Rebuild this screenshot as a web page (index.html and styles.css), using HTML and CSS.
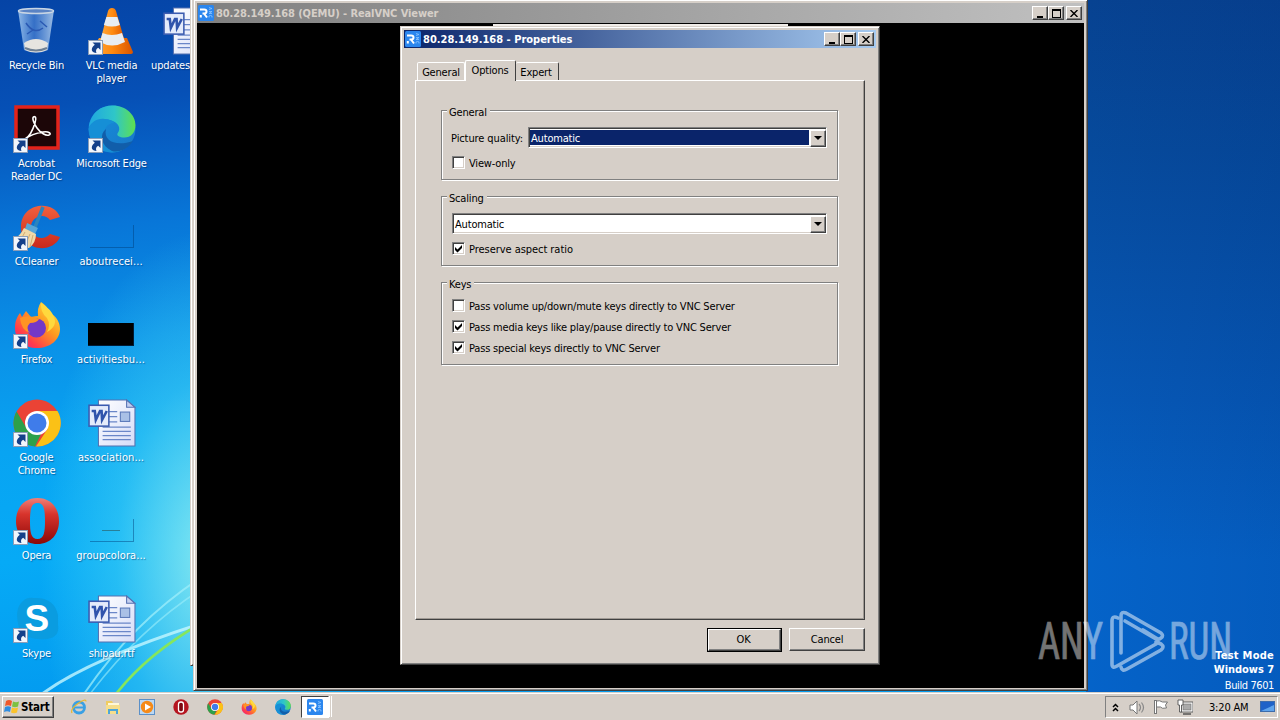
FILE: index.html
```html
<!DOCTYPE html>
<html lang="en">
<head>
<meta charset="utf-8">
<title>Desktop</title>
<link rel="stylesheet" href="styles.css">
</head>
<body>
<svg class="defs" width="0" height="0">
  <defs>
    <linearGradient id="vlcO" x1="0" x2="1"><stop offset="0" stop-color="#ffab40"/><stop offset=".5" stop-color="#ff8a10"/><stop offset="1" stop-color="#d95400"/></linearGradient>
    <linearGradient id="edgeTop" x1="0" x2="1"><stop offset="0" stop-color="#1fa7e0"/><stop offset=".55" stop-color="#2fc6c8"/><stop offset="1" stop-color="#5fe04e"/></linearGradient>
    <linearGradient id="edgeLow" x1="0" x2="1" y2="1"><stop offset="0" stop-color="#1490dc"/><stop offset="1" stop-color="#1a78c8"/></linearGradient>
    <linearGradient id="ffx" x1="1" y1="0" x2=".1" y2="1"><stop offset="0" stop-color="#fff04a"/><stop offset=".45" stop-color="#ff9a1f"/><stop offset=".8" stop-color="#ff3b4d"/><stop offset="1" stop-color="#e6208a"/></linearGradient>
    <linearGradient id="opr" x2="0" y2="1"><stop offset="0" stop-color="#f08078"/><stop offset=".35" stop-color="#d8342c"/><stop offset="1" stop-color="#8c0808"/></linearGradient>
    <linearGradient id="ccl" x2="0" y2="1"><stop offset="0" stop-color="#f2603c"/><stop offset="1" stop-color="#c8281c"/></linearGradient>
    <linearGradient id="bin" x2="1"><stop offset="0" stop-color="#a8cdf2" stop-opacity=".85"/><stop offset=".45" stop-color="#4f86d6" stop-opacity=".65"/><stop offset="1" stop-color="#b9d3ef" stop-opacity=".85"/></linearGradient>
    <linearGradient id="paper" x2="1" y2="1"><stop offset="0" stop-color="#fff"/><stop offset="1" stop-color="#d5dcf8"/></linearGradient>

    <symbol id="arrow" viewBox="0 0 15 15">
      <rect x=".5" y=".5" width="14" height="14" fill="#f2f6fc" stroke="#8a9db8"/>
      <path d="M4.500 2.500h8v7.500l-2.300-2.200C8 9 7.500 11 8.500 13 4 13 1.500 9 6.800 4.800z" fill="#14408a"/>
    </symbol>
    <symbol id="recycle" viewBox="0 0 48 48">
      <path d="M5 3 11 43q12 6 24 0L41 3z" fill="url(#bin)"/>
      <path d="M11 36q12-8 24 0l-1 7q-11 5-22 0z" fill="#e6e4e0"/>
      <path d="M12 41q11 5 22 0" stroke="#6f8093" fill="none" stroke-width="2"/>
      <path d="M13 16q8 12 17 5M14 27l6-4M27 14l7 6" stroke="#2a59b3" stroke-width="1.500" fill="none"/>
      <ellipse cx="23" cy="4" rx="17.500" ry="2.500" fill="#5a83c4" stroke="#c8d5e4" stroke-width="1.500"/>
    </symbol>
    <symbol id="vlc" viewBox="0 0 48 48">
      <path d="M11 31h28l6 14q0 2-2 2H5q-2 0-2-2z" fill="url(#vlcO)"/>
      <path d="M24 1q3 0 4 3l9 31q-13 7-25 0L20 4q1-3 4-3z" fill="url(#vlcO)"/>
      <path d="M18.400 10h11l2.500 8q-8 3-16 0z" fill="#e8edf2"/>
      <path d="M14.500 26q9 4 19.500 0l3 9q-13 7-25 0z" fill="#e8edf2"/>
    </symbol>
    <symbol id="doc" viewBox="0 0 46 46">
      <path d="M10 1h27l8 7v37H10z" fill="url(#paper)" stroke="#5570b0" stroke-width="1"/>
      <path d="M37 1v7h8z" fill="#c3cff0" stroke="#5570b0"/>
      <path d="M20 12h8M20 17h8M20 22h8M14 27h27M14 31h27M14 35h27M14 39h27" stroke="#6a86c8" stroke-width="1.200"/>
      <rect x="31" y="12.500" width="9" height="9" fill="#a9c0e6" stroke="#5978b8"/>
      <rect x="1" y="6" width="19" height="20" fill="#e4ebfb" stroke="#3c5cb0" stroke-width="1.500"/>
      <path d="M3.500 11.500h3l1 8.500 4-8.500h1.500l.5 8.500 4.500-8.500" fill="none" stroke="#3054ac" stroke-width="2.500"/>
    </symbol>
    <symbol id="acrobat" viewBox="0 0 48 48">
      <rect x="3" y="2" width="42" height="41" fill="#1c0608" stroke="#e2231a" stroke-width="3.500"/>
      <path d="M12 34q6-3 10-16c2-6 0-7-1.500-6s0 6 3.500 11 9 8 12 7 0-4-6-3-14 4-18 7z" fill="none" stroke="#fff" stroke-width="1.600"/>
    </symbol>
    <symbol id="edge" viewBox="0 0 48 48">
      <circle cx="24" cy="24" r="23.500" fill="url(#edgeLow)"/>
      <path d="M.8 22C3 8 12 .5 25 .5 38 .5 47.500 10 47.500 20c0 8-5 12.500-11 12.500-5 0-8-2-7-4 4-5 1-11-6-13C14 13 5 16 .8 22z" fill="url(#edgeTop)"/>
      <path d="M.6 24c2-7 9-11 16-10 5 0 8 2 10 4-8 0-12 7-10 14 2 8 9 14 17 13.500Q28 48 23 47.500 2 46 .6 24z" fill="#168fd6"/>
      <path d="M18 24c-3 12 10 18 27 12-5 8-14 12-21 10-11-5-13-17-6-22z" fill="#115eaa"/>
    </symbol>
    <symbol id="ccleaner" viewBox="0 0 48 48">
      <path d="M47 14 37 17C31 9 18 14 18 24s12 15 19 7l10 3C39 52 8 48 8 24S40-4 47 14z" fill="url(#ccl)"/>
      <path d="M30 4 22 24" stroke="#2c84bc" stroke-width="3.500"/>
      <path d="M14 20l11 5-3 6-10-5z" fill="#57a6d6"/>
      <path d="M11 25l12 6q0 9-7 14Q7 45 0 37q7-4 11-12z" fill="#f0d9a8"/>
      <path d="M12 29 6 40M17 31l-5 12M20 32l-3 12" stroke="#d2ac70"/>
    </symbol>
    <symbol id="firefox" viewBox="0 0 48 48">
      <path d="M28 1c6 4 8 8 9 11 6 3 10 9 10 16 0 11-10 19-23 19S2 39 2 27c0-7 2-11 5-15l2 4 4-6 5 6q4-1 7-1-1-8 3-14z" fill="url(#ffx)"/>
      <circle cx="23.500" cy="27" r="9.500" fill="#7438c8"/>
      <path d="M7 17q8-4 19 1-2 4-9 4-5 5 0 10-9-3-10-15z" fill="#ff9324"/>
      <path d="M28 2q-1 9 6 15 4 7 0 14 11-6 7-15-3-8-13-14z" fill="#ffd93d"/>
    </symbol>
    <symbol id="chrome" viewBox="0 0 48 48">
      <circle cx="24" cy="24" r="23.500" fill="#ea4335"/>
      <path d="M24 12h20.500A23.500 23.500 0 0 1 23 47.500L34.500 30z" fill="#fbc116"/>
      <path d="M3.600 12.500 14 30q5 6 14 5l-6 12.500A23.500 23.500 0 0 1 3.600 12.500z" fill="#2da04a"/>
      <circle cx="24" cy="24" r="12" fill="#fff"/><circle cx="24" cy="24" r="9.500" fill="#3f7cea"/>
    </symbol>
    <symbol id="opera" viewBox="0 0 48 48">
      <path fill-rule="evenodd" d="M24.500 1C38 1 46 11 46 24S38 47 24.500 47 3 37 3 24 11 1 24.500 1zm0 5C18 6 17 13 17 24s1 18 7.500 18S32 35 32 24 31 6 24.500 6z" fill="url(#opr)"/>
    </symbol>
    <symbol id="skype" viewBox="0 0 48 48">
      <path d="M10 6q4-4 11-3 20-1 24 17 0 5 0 10 2 12-11 14-18 2-27-8-7-22 3-30z" fill="#0a9ce0"/>
    </symbol>
    <symbol id="vnc" viewBox="0 0 16 16">
      <rect width="16" height="16" rx="1.500" fill="#2b86ee"/>
      <path d="M2 4.500h4.200q2.300 0 2.300 2T6.200 8.500H4.500M6 8.500l3 4M2.800 12.500V10" fill="none" stroke="#fff" stroke-width="2"/>
      <path d="M11 2.500l3 1-3 1M11 6.500h3l-3 2h3M14 12.500V11q-1.500-1-3 0v1.500" fill="none" stroke="#8cc4ff" stroke-width=".8"/>
    </symbol>
    <symbol id="check" viewBox="0 0 13 13"><path d="M3 5v3l2.500 2.500L10 6V3L5.500 7.500z" fill="#000"/></symbol>
  </defs>
</svg>

<main class="desktop">
  <svg class="rays" width="200" height="260" viewBox="0 0 200 260">
    <g fill="none">
      <path d="M42 236C75 212 125 190 200 166" stroke="#c4f6ff" stroke-width="3" opacity=".8"/>
      <path d="M84 236C115 190 155 150 200 120" stroke="#9deefa" stroke-width="2" opacity=".75"/>
      <path d="M90 236C125 190 160 158 200 132" stroke="#9deefa" stroke-width="1.500" opacity=".6"/>
      <path d="M116 236C138 208 165 186 200 166" stroke="#86e65c" stroke-width="2.600"/>
    </g>
  </svg>

  <section class="icons">
    <div class="icon"><span class="pic"><svg class="art"><use href="#recycle"/></svg></span><span class="cap">Recycle Bin</span></div>
    <div class="icon"><span class="pic"><svg class="art"><use href="#vlc"/></svg><svg class="link"><use href="#arrow"/></svg></span><span class="cap">VLC media<br>player</span></div>
    <div class="icon"><span class="pic"><svg class="art"><use href="#doc"/></svg></span><span class="cap cut">updates</span></div>
    <div class="icon"><span class="pic"><svg class="art"><use href="#acrobat"/></svg><svg class="link"><use href="#arrow"/></svg></span><span class="cap">Acrobat<br>Reader DC</span></div>
    <div class="icon"><span class="pic"><svg class="art"><use href="#edge"/></svg><svg class="link"><use href="#arrow"/></svg></span><span class="cap">Microsoft Edge</span></div>
    <i></i>
    <div class="icon"><span class="pic"><svg class="art"><use href="#ccleaner"/></svg><svg class="link"><use href="#arrow"/></svg></span><span class="cap">CCleaner</span></div>
    <div class="icon"><span class="pic"><b class="thumb"></b></span><span class="cap long">aboutrecei...</span></div>
    <i></i>
    <div class="icon"><span class="pic"><svg class="art"><use href="#firefox"/></svg><svg class="link"><use href="#arrow"/></svg></span><span class="cap">Firefox</span></div>
    <div class="icon"><span class="pic"><b class="thumb black"></b></span><span class="cap long">activitiesbu...</span></div>
    <i></i>
    <div class="icon"><span class="pic"><svg class="art"><use href="#chrome"/></svg><svg class="link"><use href="#arrow"/></svg></span><span class="cap">Google<br>Chrome</span></div>
    <div class="icon"><span class="pic"><svg class="art"><use href="#doc"/></svg></span><span class="cap long">association...</span></div>
    <i></i>
    <div class="icon"><span class="pic"><svg class="art"><use href="#opera"/></svg><svg class="link"><use href="#arrow"/></svg></span><span class="cap">Opera</span></div>
    <div class="icon"><span class="pic"><b class="thumb dash"></b></span><span class="cap long">groupcolora...</span></div>
    <i></i>
    <div class="icon"><span class="pic"><svg class="art"><use href="#skype"/></svg><span class="sk">S</span><svg class="link"><use href="#arrow"/></svg></span><span class="cap">Skype</span></div>
    <div class="icon"><span class="pic"><svg class="art"><use href="#doc"/></svg></span><span class="cap">shipau.rtf</span></div>
  </section>

  <div class="window back"></div>
  <div class="window viewer">
    <header class="title inactive">
      <svg class="ticon"><use href="#vnc"/></svg><span class="ttext">80.28.149.168 (QEMU) - RealVNC Viewer</span>
      <span class="wbtn"><b class="min"></b></span><span class="wbtn"><b class="max"></b></span><span class="wbtn close"><svg width="8" height="7" viewBox="0 0 8 7"><path d="M.5 0 7.500 7M7.500 0 .5 7" stroke="#000" stroke-width="1.400"/></svg></span>
    </header>
    <div class="screen"><div class="sliver"></div></div>
  </div>

  <div class="window dialog">
    <header class="title active">
      <svg class="ticon"><use href="#vnc"/></svg><span class="ttext">80.28.149.168 - Properties</span>
      <span class="wbtn"><b class="min"></b></span><span class="wbtn"><b class="max"></b></span><span class="wbtn close"><svg width="8" height="7" viewBox="0 0 8 7"><path d="M.5 0 7.500 7M7.500 0 .5 7" stroke="#000" stroke-width="1.400"/></svg></span>
    </header>
    <nav class="tabs"><span class="tab first">General</span><span class="tab on">Options</span><span class="tab last">Expert</span></nav>
    <div class="pane">
      <section class="group"><h2>General</h2>
        <div class="row quality"><label>Picture quality:</label><div class="combo focus"><span>Automatic</span><b class="drop"></b></div></div>
        <div class="row opt view"><b class="box"></b><label>View-only</label></div>
      </section>
      <section class="group"><h2>Scaling</h2>
        <div class="row scale"><div class="combo"><span>Automatic</span><b class="drop"></b></div></div>
        <div class="row opt"><b class="box"><svg><use href="#check"/></svg></b><label class="aspect">Preserve aspect ratio</label></div>
      </section>
      <section class="group keys"><h2>Keys</h2>
        <div class="row opt"><b class="box"></b><label>Pass volume up/down/mute keys directly to VNC Server</label></div>
        <div class="row opt"><b class="box"><svg><use href="#check"/></svg></b><label>Pass media keys like play/pause directly to VNC Server</label></div>
        <div class="row opt"><b class="box"><svg><use href="#check"/></svg></b><label>Pass special keys directly to VNC Server</label></div>
      </section>
    </div>
    <footer class="actions"><div class="default"><button class="btn">OK</button></div><button class="btn wide">Cancel</button></footer>
  </div>

  <div class="build"><b>Test Mode</b><b>Windows 7</b><span>Build 7601</span></div>
  <svg class="mark" width="200" height="70" viewBox="1035 605 200 70">
    <g fill="#fff" stroke="#fff" stroke-width=".7" opacity=".45" font-family="Roboto, sans-serif" font-size="52">
      <text x="1038" y="659" textLength="65" lengthAdjust="spacingAndGlyphs">ANY</text>
      <text x="1169" y="659" textLength="63" lengthAdjust="spacingAndGlyphs">RUN</text>
    </g>
    <g fill="none" stroke="#fff" opacity=".5" stroke-width="3.600" stroke-linejoin="round" stroke-linecap="round">
      <path d="M1118 618q-6-3-6 3v43q0 5 5 2l39-22q4-3 0-5l-31-18"/>
      <path d="M1121 653v-37q0-5 5-3l35 20q3 3 0 5-2 2-5 0l-13-8"/>
      <path d="M1121 667q1 5 6 2l34-19q4-3 0-6l-5-2"/>
    </g>
  </svg>
</main>

<footer class="taskbar">
  <div class="start"><svg width="16" height="16" viewBox="0 0 16 16"><path d="M2 2q3-2 6 0L7 7Q4 5.500 1 7z" fill="#f0582a"/><path d="M9 2.500q3 1.500 6 0L14 7.500q-3 1.500-6 0z" fill="#7cc142"/><path d="M1 8q3-1.500 6 0l-1 5q-3-1.500-6 0z" fill="#2f8de0"/><path d="M8 8.500q3 1.500 6 0l-1 5q-3 1.500-6 0z" fill="#fbc32c"/></svg><span>Start</span></div>
  <div class="quick">
    <svg viewBox="0 0 16 16"><circle cx="8" cy="8.500" r="5.500" fill="none" stroke="#3aa0e4" stroke-width="2.800"/><path d="M4 8.500h9" stroke="#3aa0e4" stroke-width="2"/><path d="M1 14Q-1 10 7 4.500T15 2.500" fill="none" stroke="#e8b830" stroke-width="1.200"/></svg>
    <svg viewBox="0 0 16 16"><path d="M1 2h6l1 2h6v3H1z" fill="#f0cc60"/><path d="M3 4h11v3H3z" fill="#fff8d8"/><path d="M1 6h14v9H1z" fill="#f6de8c"/><path d="M4 15v-4h8v4" fill="none" stroke="#4fa6d8" stroke-width="2"/></svg>
    <svg viewBox="0 0 16 16"><rect x=".5" y=".5" width="15" height="15" fill="#bcd8f3" stroke="#5b90c8"/><circle cx="8" cy="8" r="6.200" fill="#f58a18"/><path d="M6 4.500v7L12 8z" fill="#fff"/></svg>
    <svg viewBox="0 0 16 16"><circle cx="8" cy="8" r="7.700" fill="#b51520"/><rect x="5.500" y="3" width="5" height="10" rx="2.300" fill="#7c0710" stroke="#fff" stroke-width="1.300"/></svg>
    <svg><use href="#chrome"/></svg>
    <svg><use href="#firefox"/></svg>
    <svg><use href="#edge"/></svg>
  </div>
  <div class="task"><svg><use href="#vnc"/></svg></div><b class="grip"></b>
  <div class="tray">
    <svg class="chev" width="7" height="9" viewBox="0 0 7 9"><path d="M1 4 3.500 1.500 6 4M1 8l2.500-2.500L6 8" fill="none" stroke="#000" stroke-width="1.500"/></svg>
    <svg class="snd" width="17" height="15" viewBox="0 0 17 15"><path d="M1 5h3l4-4v13l-4-4H1z" fill="#fff" stroke="#777"/><path d="M10 4q3 3.500 0 7M12.500 2.500q4 5 0 10" fill="none" stroke="#888" stroke-width="1.200"/></svg>
    <svg class="flag" width="16" height="16" viewBox="0 0 16 16"><path d="M2.500 1v14" stroke="#777" stroke-width="3"/><path d="M3.500 2q3-1 6 1h5l-2 3 1 3q-5 1-6-1H3.500z" fill="#fff" stroke="#777"/><path d="M2.500 2v12" stroke="#fff"/></svg>
    <svg class="net" width="16" height="16" viewBox="0 0 16 16"><rect x="4" y="3" width="12" height="10" fill="#fff" stroke="#555" stroke-width=".9"/><rect x="6" y="5" width="8" height="6" fill="#aaa" stroke="#777" stroke-width=".7"/><path d="M6 15h8" stroke="#555" stroke-width="1.500"/><path d="M1 1h5v5H4.500v7H2.500V6H1z" fill="#fff" stroke="#555" stroke-width=".9"/></svg>
    <span class="clock">3:20 AM</span>
    <svg class="show" width="15" height="13" viewBox="0 0 15 13"><rect x=".5" y=".5" width="14" height="10" fill="#1e62c8" stroke="#3d6cab"/><path d="M1 10 14 4v6z" fill="#5fa4ec"/><path d="M5 12h5" stroke="#cbd8e8"/></svg>
  </div>
</footer>
</body>
</html>
```
FILE: styles.css
```css
* { box-sizing: border-box; }
body {
  margin: 0; width: 1280px; height: 720px; overflow: hidden;
  display: flex; flex-direction: column;
  font: 11px/13px "DejaVu Sans Condensed", "DejaVu Sans", sans-serif; font-stretch: condensed;
  letter-spacing: -0.18px; color: #000;
}
.defs { position: absolute; }
.desktop {
  position: relative; width: 1280px; height: 692px; flex: none; overflow: hidden;
  background:
    linear-gradient(90deg, transparent 1086px, rgba(0,35,110,.12) 1280px),
    linear-gradient(180deg, #074291 0, #064a9c 150px, #0658b6 400px, #0563c8 560px, #0563c9 692px) 1086px 0 / 194px 692px no-repeat,
    radial-gradient(ellipse 170px 330px at 210px 560px, rgba(165,248,240,.8), rgba(80,220,245,.42) 55%, transparent),
    linear-gradient(174deg, #0544a6 0, #0650b6 110px, #0876d8 235px, #0a92e8 350px, #08a4f2 450px, #06aaf6 560px, #039cf0 692px);
}
.rays { position: absolute; left: 0; top: 458px; }
.icons { position: relative; left: -1px; display: grid; grid-template-columns: repeat(3, 75px); grid-auto-rows: 98px; padding-top: 7px; }
.icon { display: flex; flex-direction: column; align-items: center; color: #fff; text-align: center; text-shadow: 1px 1px 1px rgba(0,35,90,.5); }
.pic { position: relative; width: 48px; height: 48px; margin: 0 0 4px; display: flex; align-items: flex-end; justify-content: center; }
.art { width: 48px; height: 48px; }
.cap { white-space: nowrap; }
.long { letter-spacing: .08px; margin-left: -1px; }
.cut { margin-left: -32px; }
.link { position: absolute; left: 0; bottom: 0; width: 15px; height: 15px; }
.sk { position: absolute; left: 12px; top: 1px; font: bold 37px/46px "Liberation Sans", sans-serif; text-shadow: none; letter-spacing: 0; }
.thumb { width: 44px; height: 23px; margin-bottom: 3px; border: solid rgba(0,60,120,.45); border-width: 0 1px 1px 0; }
.thumb.black { background: #000; width: 46px; margin-right: 2px; }
.thumb.dash { background: linear-gradient(#287f98, #287f98) center / 18px 1px no-repeat; }

.window { position: absolute; background: #d6cfc8; border: 1px solid; border-color: #d6cfc8 #404040 #404040 #d6cfc8; box-shadow: inset 1px 1px #fff, inset -1px -1px #808080; display: flex; flex-direction: column; }
.back { left: 190px; top: -4px; width: 30px; height: 670px; }
.viewer { left: 193px; top: -1px; width: 895px; height: 692px; padding: 3px 3px 2px; }
.dialog { left: 400px; top: 26px; width: 480px; height: 639px; padding: 3px; }
.title { height: 18px; flex: none; display: flex; align-items: center; padding: 0 2px 0 1px; font-weight: bold; color: #fff; letter-spacing: 0; }
.viewer .title { height: 20px; letter-spacing: -.1px; }
.inactive { background: linear-gradient(90deg, #808080, #c0c0c0); }
.active { background: linear-gradient(90deg, #0a246a, #a6caf0); }
.inactive.title { color: #d6cfc8; }
.ticon { width: 16px; height: 16px; margin-right: 2px; }
.ttext { flex: 1; }
.wbtn { width: 16px; height: 14px; background: #d6cfc8; border: 1px solid; border-color: #fff #404040 #404040 #fff; box-shadow: inset -1px -1px #808080; display: flex; align-items: center; justify-content: center; }
.close { margin-left: 2px; }
.min { width: 6px; height: 2px; background: #000; margin-top: 7px; }
.max { width: 9px; height: 9px; border: 1px solid #000; border-top-width: 2px; }
.screen { flex: 1; background: #000; }
.sliver { margin: 1px 0 0 296px; width: 295px; height: 2px; background: #f0ece8; }

.tabs { display: flex; align-items: flex-end; height: 32px; padding-left: 13px; flex: none; }
.tab { height: 18px; width: 48px; border: solid; border-width: 1px 1px 0; border-color: #fff #404040 #fff #fff; border-radius: 2px 2px 0 0; padding-top: 3px; text-align: center; }
.tab.first { border-right-color: #fff; }
.tab.on { position: relative; height: 21px; width: 51px; margin-bottom: -1px; background: #d6cfc8; padding: 3px 1px 0 0; }
.tab.last { width: 43px; border-left: 0; padding-right: 2px; }
.pane { width: 450px; height: 540px; margin-left: 11px; flex: none; border: 1px solid; border-color: #fff #404040 #404040 #fff; box-shadow: inset -1px -1px #a09a94; padding: 29px 25px; display: flex; flex-direction: column; gap: 16px; }
.group { width: 397px; height: 70px; border: 1px solid #808080; box-shadow: 1px 1px #fff, inset 1px 1px #fff; }
.group.keys { height: 83px; }
.group h2 { font: inherit; background: #d6cfc8; width: max-content; margin: -5px 0 0 5px; padding: 0 3px 0 2px; }
.row { display: flex; align-items: center; }
.quality { margin: 8px 0 0 9px; gap: 5px; height: 21px; }
.quality label { width: 72px; white-space: nowrap; letter-spacing: -.1px; padding-top: 1px; }
.scale { margin: 8px 0 0 10px; height: 21px; }
.combo { width: 375px; height: 21px; border: 1px solid; border-color: #808080 #fff #fff #808080; box-shadow: inset 1px 1px #404040, inset -1px -1px #d6cfc8; background: #fff; display: flex; padding: 1px 0 1px 2px; }
.quality .combo { width: 299px; }
.combo span { flex: 1; padding: 3px 0 0; line-height: 13px; }
.focus span { background: #0a246a; color: #fff; border: solid #fff; border-width: 1px 1px 1px 0; padding: 2px 0 0 1px; margin-left: -1px; }
.drop { width: 16px; height: 17px; margin-top: 1px; background: #d6cfc8; border: 1px solid; border-color: #fff #404040 #404040 #fff; box-shadow: inset -1px -1px #808080; }
.drop::after { content: ""; display: block; width: 0; margin: 5px 0 0 3px; border: 4px solid transparent; border-top-color: #000; border-bottom: 0; }
.opt { height: 13px; margin: 9px 0 0 10px; gap: 4px; white-space: nowrap; }
.aspect { letter-spacing: -.05px; }
.keys .opt { margin-top: 8px; }
.keys .opt:nth-child(2) { margin-top: 9px; }
.box { width: 13px; height: 13px; margin-top: -2px; background: #fff; border: 1px solid; border-color: #808080 #fff #fff #808080; box-shadow: inset 1px 1px #404040, inset -1px -1px #d6cfc8; }
.box svg { display: block; width: 13px; height: 13px; margin: -1px; }
.actions { display: flex; gap: 7px; margin: 8px 11px 0 303px; }
.default { border: 1px solid #000; width: 76px; height: 24px; display: flex; }
.btn { flex: 1; background: #d6cfc8; border: 1px solid; border-color: #fff #404040 #404040 #fff; box-shadow: inset -1px -1px #808080; font: inherit; letter-spacing: inherit; padding: 0 2px 2px 0; }
.wide { flex: none; width: 76px; height: 23px; padding: 0 0 1px; }

.build { position: absolute; right: 6px; top: 649px; display: flex; flex-direction: column; align-items: flex-end; color: #fff; line-height: 14px; letter-spacing: -.05px; }
.build b:first-child { letter-spacing: .25px; }
.build span { margin-top: 2px; letter-spacing: -.4px; }
.mark { position: absolute; left: 1035px; top: 605px; }

.taskbar { height: 28px; flex: none; background: #d6cfc8; border-top: 1px solid #d6cfc8; box-shadow: inset 0 1px #fff; display: flex; align-items: flex-start; padding: 3px 2px 0; }
.start { width: 52px; height: 22px; border: 1px solid; border-color: #fff #404040 #404040 #fff; box-shadow: inset -1px -1px #808080; display: flex; align-items: center; padding-left: 1px; font-weight: bold; font-size: 11.500px; gap: 1px; letter-spacing: -.2px; }
.quick { display: flex; gap: 18px; margin: 3px 0 0 17px; }
.quick svg { width: 16px; height: 16px; }
.task { margin-left: 10px; width: 28px; height: 22px; border: 1px solid; border-color: #404040 #fff #fff #404040; background: #fff; display: flex; align-items: center; justify-content: center; }
.task svg { width: 16px; height: 16px; }
.grip { width: 3px; height: 21px; border: solid; border-width: 0 1px; border-color: #fff; }
.tray { margin-left: auto; width: 173px; height: 22px; border: 1px solid; border-color: #808080 #fff #fff #808080; display: flex; align-items: center; padding-left: 6px; }
.snd { margin-left: 10px; }
.flag { margin-left: 7px; }
.net { margin-left: 8px; }
.clock { margin-left: 16px; width: 41px; white-space: nowrap; }
.show { margin-left: 10px; }
```
